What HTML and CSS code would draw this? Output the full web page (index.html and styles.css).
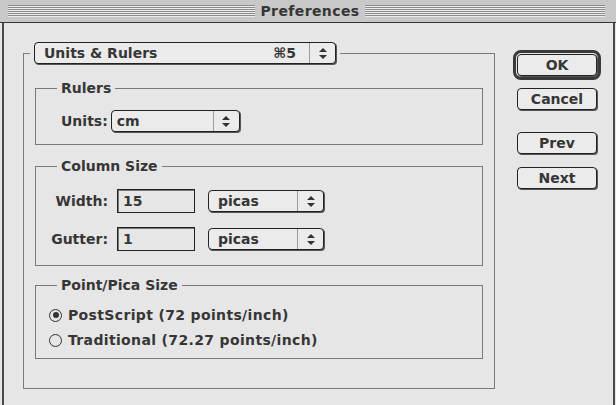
FILE: index.html
```html
<!DOCTYPE html>
<html>
<head>
<meta charset="utf-8">
<title>Preferences</title>
<link rel="stylesheet" href="styles.css">
</head>
<body>
<div class="titlebar">
  <div class="stripes stripes-left"></div>
  <span class="title">Preferences</span>
  <div class="stripes"></div>
</div>
<div class="window">
  <fieldset class="outer">
    <legend class="outer-legend">
      <div class="popup popup-main">
        <span class="popup-label">Units &amp; Rulers</span>
        <span class="popup-key">&#8984;5</span>
        <span class="popup-arrow"><svg width="8" height="11" viewBox="0 0 8 11"><path d="M4 0L8 4H0Z M4 11L8 7H0Z" fill="#333"/></svg></span>
      </div>
    </legend>

    <fieldset class="group group-rulers">
      <legend class="group-legend">Rulers</legend>
      <div class="units-row">
        <span class="label">Units:</span>
        <div class="popup popup-cm">
          <span class="popup-label popup-label-tight">cm</span>
          <span class="popup-arrow"><svg width="8" height="11" viewBox="0 0 8 11"><path d="M4 0L8 4H0Z M4 11L8 7H0Z" fill="#333"/></svg></span>
        </div>
      </div>
    </fieldset>

    <fieldset class="group group-column">
      <legend class="group-legend">Column Size</legend>
      <div class="fields">
        <span class="label label-right">Width:</span>
        <div class="field">15</div>
        <div class="popup popup-picas">
          <span class="popup-label">picas</span>
          <span class="popup-arrow"><svg width="8" height="11" viewBox="0 0 8 11"><path d="M4 0L8 4H0Z M4 11L8 7H0Z" fill="#333"/></svg></span>
        </div>
        <span class="label label-right">Gutter:</span>
        <div class="field">1</div>
        <div class="popup popup-picas">
          <span class="popup-label">picas</span>
          <span class="popup-arrow"><svg width="8" height="11" viewBox="0 0 8 11"><path d="M4 0L8 4H0Z M4 11L8 7H0Z" fill="#333"/></svg></span>
        </div>
      </div>
    </fieldset>

    <fieldset class="group group-point">
      <legend class="group-legend">Point/Pica Size</legend>
      <div class="radios">
        <div class="radio"><span class="radio-mark radio-on"></span><span class="radio-text">PostScript (72 points/inch)</span></div>
        <div class="radio"><span class="radio-mark"></span><span class="radio-text">Traditional (72.27 points/inch)</span></div>
      </div>
    </fieldset>
  </fieldset>

  <div class="buttons">
    <div class="btn-default"><button class="btn">OK</button></div>
    <button class="btn btn-cancel">Cancel</button>
    <button class="btn btn-prev">Prev</button>
    <button class="btn btn-next">Next</button>
  </div>
</div>
</body>
</html>
```

FILE: styles.css
```css
html, body {
  margin: 0;
  padding: 0;
}
body {
  width: 616px;
  height: 405px;
  overflow: hidden;
  background: #e6e6e6;
  color: #363636;
  font-family: "DejaVu Sans", "Liberation Sans", sans-serif;
  font-weight: bold;
  font-size: 14px;
}

/* title bar */
.titlebar {
  height: 22px;
  display: flex;
  align-items: center;
  background: #c8c8c8;
  border-bottom: 1px solid #333;
  padding: 0 11px 0 8px;
}
.stripes {
  flex: 1;
  height: 12px;
  background: repeating-linear-gradient(to bottom, #8c8c8c 0 1px, #ececec 1px 2px);
}
.stripes-left {
  flex: 0 0 247px;
}
.title {
  width: 110px;
  text-align: center;
  line-height: 22px;
  letter-spacing: 0.4px;
}

/* window body */
.window {
  display: flex;
  align-items: flex-start;
  height: 382px;
  margin: 0 1px 0 2px;
  border-left: 2px solid #4a4a4a;
  border-right: 2px solid #4a4a4a;
}

fieldset {
  min-width: 0;
  margin: 0;
  box-sizing: border-box;
}
.outer {
  width: 472px;
  margin: 19px 0 0 19px;
  border: 1px solid #7a7a7a;
  padding: 17px 11px 29px;
}
.outer-legend {
  margin-left: -5px;
  padding: 0 4px;
}

.group {
  border: 1px solid #7a7a7a;
  padding: 15px 0 12px;
}
.group-legend {
  margin-left: 21px;
  padding: 0 4px;
  line-height: 14px;
}
.group-column {
  margin-top: 14px;
  padding: 16px 0 14px;
}
.group-point {
  margin-top: 12px;
  padding: 14px 0 9px;
}

/* popup menus */
.popup {
  display: flex;
  align-items: center;
  height: 22px;
  box-sizing: border-box;
  border: 1px solid #222;
  border-radius: 4px;
  box-shadow: 1px 1px 0 #555;
  background: #ebebeb;
}
.popup-main { width: 302px; }
.popup-cm { width: 129px; }
.popup-picas { width: 116px; }
.popup-label {
  flex: 1;
  padding-left: 9px;
  line-height: 20px;
}
.popup-label-tight { padding-left: 5px; }
.popup-key {
  padding-right: 13px;
  line-height: 20px;
}
.popup-arrow {
  align-self: stretch;
  width: 25px;
  border-left: 1px solid #9a9a9a;
  display: flex;
  align-items: center;
  justify-content: center;
}

/* rows */
.units-row {
  display: flex;
  align-items: center;
  gap: 3px;
  margin-left: 25px;
}
.fields {
  display: grid;
  grid-template-columns: 59px 78px 116px;
  grid-auto-rows: 24px;
  column-gap: 9px;
  row-gap: 14px;
  align-items: center;
  margin-left: 13px;
}
.label-right { text-align: right; }
.fields .popup { margin-left: 4px; }
.field {
  height: 24px;
  box-sizing: border-box;
  border: 1px solid #222;
  box-shadow: inset 1px 1px 0 #777;
  padding-left: 5px;
  display: flex;
  align-items: center;
}

.radios {
  display: flex;
  flex-direction: column;
  gap: 7px;
  margin-left: 13px;
}
.radio {
  display: flex;
  align-items: center;
  gap: 6px;
  height: 18px;
}
.radio-text {
  letter-spacing: 0.35px;
}
.radio-mark {
  width: 13px;
  height: 13px;
  box-sizing: border-box;
  border: 1.5px solid #333;
  border-radius: 50%;
  display: flex;
  align-items: center;
  justify-content: center;
}
.radio-on::after {
  content: "";
  width: 6px;
  height: 6px;
  border-radius: 50%;
  background: #333;
}

/* buttons */
.buttons {
  width: 88px;
  margin: 27px 0 0 18px;
  display: flex;
  flex-direction: column;
  align-items: center;
}
.btn-default {
  border: 3px solid #3a3a3a;
  border-radius: 8px;
  padding: 1px;
}
.btn {
  width: 80px;
  height: 22px;
  box-sizing: border-box;
  margin: 0;
  padding: 0;
  border: 1px solid #222;
  border-radius: 4px;
  box-shadow: 1px 1px 0 #555;
  background: #ebebeb;
  color: inherit;
  font: inherit;
  display: flex;
  align-items: center;
  justify-content: center;
}
.btn-cancel { margin-top: 8px; }
.btn-prev { margin-top: 22px; }
.btn-next { margin-top: 13px; }
```
